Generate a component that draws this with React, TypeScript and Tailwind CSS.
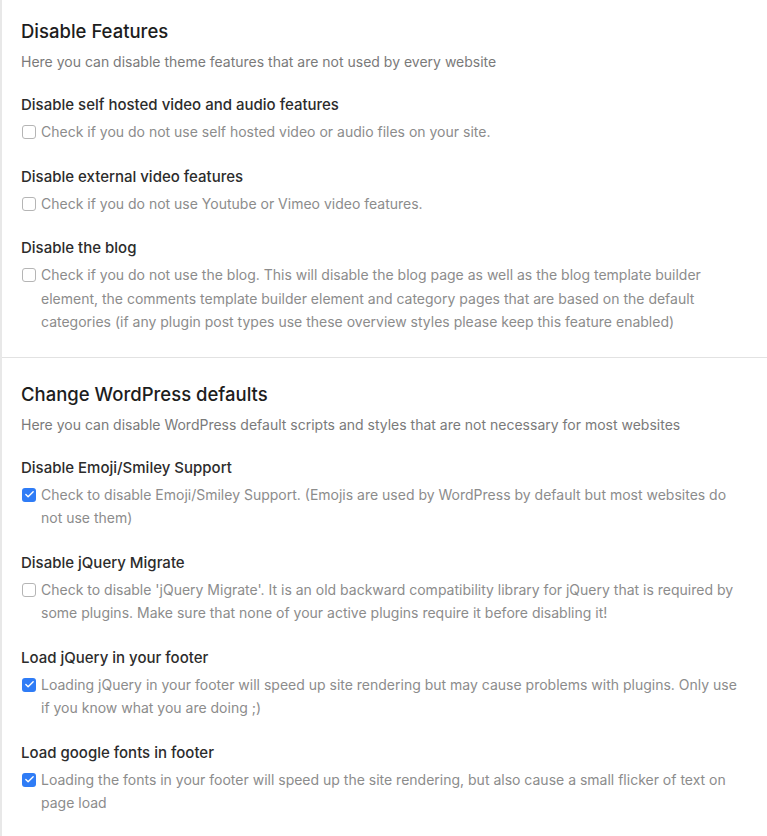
import { Check } from "lucide-react";

type Option = {
  title: string;
  text: string;
  checked: boolean;
};

type Section = {
  heading: string;
  intro: string;
  options: Option[];
};

const sections: Section[] = [
  {
    heading: "Disable Features",
    intro:
      "Here you can disable theme features that are not used by every website",
    options: [
      {
        title: "Disable self hosted video and audio features",
        text: "Check if you do not use self hosted video or audio files on your site.",
        checked: false,
      },
      {
        title: "Disable external video features",
        text: "Check if you do not use Youtube or Vimeo video features.",
        checked: false,
      },
      {
        title: "Disable the blog",
        text: "Check if you do not use the blog. This will disable the blog page as well as the blog template builder element, the comments template builder element and category pages that are based on the default categories (if any plugin post types use these overview styles please keep this feature enabled)",
        checked: false,
      },
    ],
  },
  {
    heading: "Change WordPress defaults",
    intro:
      "Here you can disable WordPress default scripts and styles that are not necessary for most websites",
    options: [
      {
        title: "Disable Emoji/Smiley Support",
        text: "Check to disable Emoji/Smiley Support. (Emojis are used by WordPress by default but most websites do not use them)",
        checked: true,
      },
      {
        title: "Disable jQuery Migrate",
        text: "Check to disable 'jQuery Migrate'. It is an old backward compatibility library for jQuery that is required by some plugins. Make sure that none of your active plugins require it before disabling it!",
        checked: false,
      },
      {
        title: "Load jQuery in your footer",
        text: "Loading jQuery in your footer will speed up site rendering but may cause problems with plugins. Only use if you know what you are doing ;)",
        checked: true,
      },
      {
        title: "Load google fonts in footer",
        text: "Loading the fonts in your footer will speed up the site rendering, but also cause a small flicker of text on page load",
        checked: true,
      },
    ],
  },
];

function Box({ checked }: { checked: boolean }) {
  if (checked) {
    return (
      <span className="mt-[5px] flex h-[14px] w-[14px] shrink-0 items-center justify-center rounded-[3px] bg-[#2f7cf6]">
        <Check size={11} strokeWidth={3} className="text-white" />
      </span>
    );
  }
  return (
    <span className="mt-[5px] h-[14px] w-[14px] shrink-0 rounded-[3px] border border-[#b5b5b5] bg-white" />
  );
}

export default function App() {
  return (
    <main
      className="min-h-screen border-l-2 border-[#e8e8e8] bg-white"
      style={{ fontFamily: "Inter, 'Noto Sans', sans-serif" }}
    >
      {sections.map((section, i) => (
        <section
          key={section.heading}
          className={`pl-[19px] pr-6 ${
            i === 0 ? "pt-[19px] pb-[23px]" : "pt-[24px] pb-6 border-t border-[#e2e2e2]"
          }`}
        >
          <h2 className="text-[18.5px] font-medium leading-6 text-[#1d1d1d]">
            {section.heading}
          </h2>
          <p className="mt-[7px] text-[14px] leading-6 text-[#7a7a7a]">
            {section.intro}
          </p>

          <div className="mt-[19px] flex flex-col gap-[21px]">
            {section.options.map((option) => (
              <div key={option.title}>
                <h3 className="text-[15px] font-medium leading-6 text-[#2c2c2c]">
                  {option.title}
                </h3>
                <label className="mt-[3px] flex gap-[5px] pl-[1px]">
                  <Box checked={option.checked} />
                  <span className="text-[14px] leading-[23.5px] text-[#8c8c8c]">
                    {option.text}
                  </span>
                </label>
              </div>
            ))}
          </div>
        </section>
      ))}
    </main>
  );
}
